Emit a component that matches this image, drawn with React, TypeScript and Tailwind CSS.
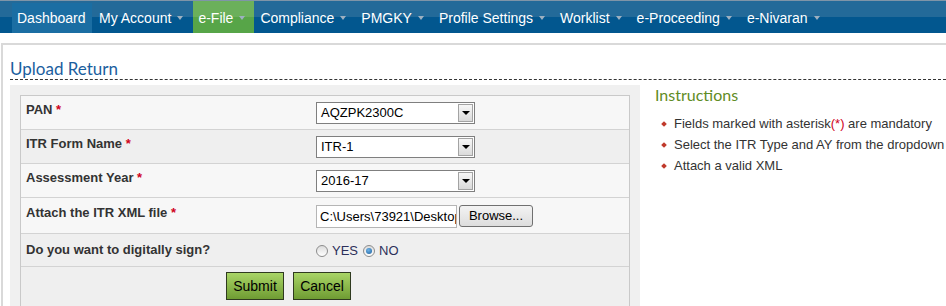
import React from "react";

const navItems = [
  { label: "Dashboard", caret: false, kind: "dash" },
  { label: "My Account", caret: true, kind: "" },
  { label: "e-File", caret: true, kind: "green" },
  { label: "Compliance", caret: true, kind: "" },
  { label: "PMGKY", caret: true, kind: "" },
  { label: "Profile Settings", caret: true, kind: "" },
  { label: "Worklist", caret: true, kind: "" },
  { label: "e-Proceeding", caret: true, kind: "" },
  { label: "e-Nivaran", caret: true, kind: "" },
];

function Caret() {
  return (
    <span className="ml-[6px] inline-block h-0 w-0 border-x-[3px] border-t-[4px] border-x-transparent border-t-[#9db0c0]" />
  );
}

function NavBar() {
  return (
    <div className="flex h-[33px] bg-[linear-gradient(to_bottom,#7f95a8_0px,#7f95a8_1px,#236a99_1px,#236a99_17px,#02578f_17px,#02578f_100%)] pl-[12px] text-[14px] text-white">
      {navItems.map((it, i) => (
        <div
          key={it.label}
          className={
            "flex h-full items-center pt-[3px] pl-[5px] " +
            (i === 1 ? "ml-[2px] " : i > 1 ? "ml-[1px] " : "") +
            (it.caret ? "pr-[9px] " : "w-[80px] ") +
            (it.kind === "dash"
              ? "bg-[linear-gradient(to_bottom,transparent_3px,#1b6ea3_3px)]"
              : it.kind === "green"
              ? "bg-[linear-gradient(to_bottom,transparent_1px,#6bb05b_1px,#6bb05b_17px,#57a548_17px)]"
              : "")
          }
        >
          <span className="leading-[16px]">{it.label}</span>
          {it.caret && <Caret />}
        </div>
      ))}
    </div>
  );
}

function Select({ value }: { value: string }) {
  return (
    <div className="flex h-[22px] w-[159px] border border-[#7f7f7f] bg-white">
      <div className="flex-1 pl-[4px] text-[13px] leading-[20px] text-black">{value}</div>
      <div className="m-[1px] flex w-[15px] items-center justify-center border border-[#a3a3a3] bg-[linear-gradient(to_bottom,#f7f7f7,#dadada)]">
        <span className="inline-block h-0 w-0 border-x-[4px] border-t-[4px] border-x-transparent border-t-black" />
      </div>
    </div>
  );
}

function Star() {
  return <span className="text-[#d0021b]"> *</span>;
}

function Radio({ checked }: { checked: boolean }) {
  return (
    <span className="flex h-[12px] w-[12px] items-center justify-center rounded-full border border-[#8c8c8c] bg-[linear-gradient(to_bottom,#dcdcdc,#ffffff)]">
      {checked && (
        <span className="h-[6px] w-[6px] rounded-full bg-[radial-gradient(circle_at_40%_35%,#6fb4e8,#1c5e9c)]" />
      )}
    </span>
  );
}

function Row({
  label,
  h,
  pt,
  ipt,
  bg,
  children,
}: {
  label: React.ReactNode;
  h: string;
  pt: string;
  ipt: string;
  bg: string;
  children: React.ReactNode;
}) {
  return (
    <div className={"flex border-b border-[#d3d3d3] " + h + " " + bg}>
      <div className={"w-[295px] pl-[5px] text-[13px] font-bold leading-[15px] text-[#333] " + pt}>{label}</div>
      <div className={ipt}>{children}</div>
    </div>
  );
}

function Bullet() {
  return <span className="ml-[7px] mr-[8px] inline-block h-[4px] w-[4px] shrink-0 rotate-45 bg-[#c0392b]" />;
}

export default function App() {
  return (
    <div className="min-h-[306px] bg-white font-['Liberation_Sans',Arial,sans-serif]">
      <NavBar />
      <div className="ml-[1px] mt-[10px] border-l-2 border-t-2 border-[#d9d9d9] pl-[7px]">
        <div className="border-b border-dashed border-[#333] pt-[13px] font-['Lato',sans-serif] text-[17px] leading-[21px] text-[#1b5e9e]">
          Upload Return
        </div>
        <div className="mt-[5px] flex">
          <div className="w-[630px] bg-[#f0f0f0] p-[10px] pb-0">
            <div className="border border-b-0 border-[#c9c9c9]">
              <Row label={<>PAN<Star /></>} h="h-[34px]" pt="pt-[6px]" ipt="pt-[6px]" bg="bg-[#f7f7f7]">
                <Select value="AQZPK2300C" />
              </Row>
              <Row label={<>ITR Form Name<Star /></>} h="h-[34px]" pt="pt-[6px]" ipt="pt-[6px]" bg="bg-[#efefef]">
                <Select value="ITR-1" />
              </Row>
              <Row label={<>Assessment Year<Star /></>} h="h-[34px]" pt="pt-[6px]" ipt="pt-[6px]" bg="bg-[#f7f7f7]">
                <Select value="2016-17" />
              </Row>
              <Row label={<>Attach the ITR XML file<Star /></>} h="h-[36px]" pt="pt-[7px]" ipt="pt-[7px]" bg="bg-[#f7f7f7]">
                <div className="flex items-start">
                  <div className="h-[23px] w-[141px] overflow-hidden whitespace-nowrap border border-[#b5b5b5] bg-white pl-[3px] text-[13px] leading-[21px] text-black">
                    C:\Users\73921\Desktop
                  </div>
                  <div className="ml-[2px] flex h-[22px] w-[74px] items-center justify-center rounded-[3px] border border-[#707070] bg-[linear-gradient(to_bottom,#f3f3f3,#dddddd)] text-[13px] text-black">
                    Browse...
                  </div>
                </div>
              </Row>
              <Row label="Do you want to digitally sign?" h="h-[33px]" pt="pt-[8px]" ipt="pt-[10px]" bg="bg-[#efefef]">
                <div className="flex items-center text-[13px] leading-[14px] text-[#2c2f5a]">
                  <Radio checked={false} />
                  <span className="ml-[4px]">YES</span>
                  <span className="ml-[5px]"><Radio checked={true} /></span>
                  <span className="ml-[4px]">NO</span>
                </div>
              </Row>
              <div className="flex h-[40px] bg-[#efefef] pl-[205px] pt-[5px]">
                <button className="flex h-[28px] w-[58px] items-center justify-center border border-[#2f3a1f] bg-[linear-gradient(to_bottom,#a9d566,#6f9c33)] text-[14px] text-black">
                  Submit
                </button>
                <button className="ml-[9px] flex h-[28px] w-[58px] items-center justify-center border border-[#2f3a1f] bg-[linear-gradient(to_bottom,#a9d566,#6f9c33)] text-[14px] text-black">
                  Cancel
                </button>
              </div>
            </div>
          </div>
          <div className="ml-[15px]">
            <div className="font-['Lato',sans-serif] text-[16px] leading-[20px] text-[#5f8c25]">Instructions</div>
            <ul className="mt-[8px] text-[13px] leading-[21px] text-[#333]">
              <li className="flex items-center">
                <Bullet />
                <span>
                  Fields marked with asterisk<span className="text-[#d0021b]">(*)</span> are mandatory
                </span>
              </li>
              <li className="flex items-center">
                <Bullet />
                <span className="whitespace-nowrap">Select the ITR Type and AY from the dropdown</span>
              </li>
              <li className="flex items-center">
                <Bullet />
                <span>Attach a valid XML</span>
              </li>
            </ul>
          </div>
        </div>
      </div>
    </div>
  );
}
